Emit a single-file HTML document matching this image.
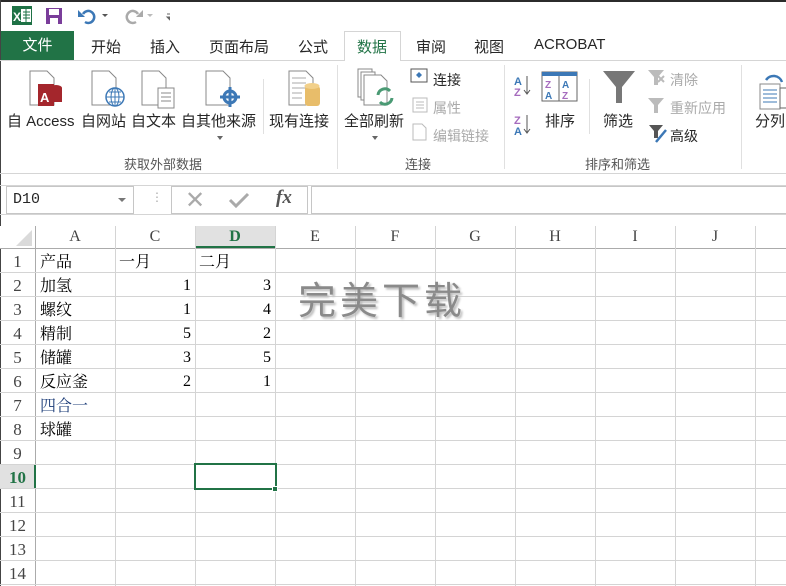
<!DOCTYPE html><html><head><meta charset="utf-8"><style>
*{margin:0;padding:0;box-sizing:border-box}
body{width:786px;height:586px;overflow:hidden;background:#fff;font-family:"Liberation Sans","Noto Sans CJK SC",sans-serif;position:relative;color:#262626}
.a{position:absolute}
.t{font-size:14px;white-space:nowrap}
.g{color:#aaa}
.lbl{font-size:13px;color:#555}
.cell{position:absolute;font-family:"Liberation Serif","Noto Serif CJK SC",serif;font-size:16px;color:#000;white-space:nowrap}
.cj{margin-top:-3px}
.vl{position:absolute;width:1px;background:#d4d4d4}
.hl{position:absolute;height:1px;background:#d4d4d4}
.rh{position:absolute;left:0;width:35px;text-align:center;font-family:"Liberation Serif",serif;font-size:17px;color:#444}
.ch{position:absolute;top:226px;height:22px;text-align:center;font-family:"Liberation Serif",serif;font-size:16px;color:#444;line-height:22px;width:80px}
</style></head><body>
<div class="a" style="left:0;top:0;width:786px;height:2px;background:#2b2b2b"></div>
<div class="a" style="left:0;top:0;width:1px;height:586px;background:#444"></div>
<svg class="a" style="left:10px;top:5px" width="160" height="22">
<rect x="2" y="1" width="20" height="19" fill="#1e7145"/><rect x="11" y="4" width="10" height="13" fill="#fff"/><path d="M13 7h7M13 10h7M13 13h7M16 4v13" stroke="#1e7145"/><text x="3" y="16" font-size="12" font-weight="bold" fill="#fff" font-family="Liberation Sans">X</text>
<rect x="36" y="3" width="16" height="16" fill="#7a3d9a"/><rect x="39" y="4" width="10" height="6" fill="#fff"/><rect x="40" y="13" width="8" height="6" fill="#fff"/>
<path d="M73 9a6 6 0 1 1 2 8" stroke="#3c78b6" stroke-width="2.5" fill="none"/><path d="M68 5v7h7z" fill="#3c78b6"/><path d="M92 9l3 3 3-3z" fill="#555"/>
<path d="M128 9a6 6 0 1 0-2 8" stroke="#aaa" stroke-width="2.5" fill="none"/><path d="M133 5v7h-7z" fill="#aaa"/><path d="M137 9l3 3 3-3z" fill="#bbb"/>
<path d="M157 9h6M157 12l3 3 3-3z" stroke="#666" fill="#666"/>
</svg>
<div class="a" style="left:1px;top:31px;width:73px;height:30px;background:#217346;color:#fff;font-size:15px;text-align:center;line-height:30px">文件</div>
<div class="a" style="left:0;top:60px;width:786px;height:1px;background:#d5d5d5"></div>
<div class="a" style="left:344px;top:31px;width:57px;height:30px;background:#fff;border:1px solid #d5d5d5;border-bottom:none"></div>
<div class="a t" style="left:91px;top:36px;font-size:15px">开始</div>
<div class="a t" style="left:150px;top:36px;font-size:15px">插入</div>
<div class="a t" style="left:209px;top:36px;font-size:15px">页面布局</div>
<div class="a t" style="left:298px;top:36px;font-size:15px">公式</div>
<div class="a t" style="left:357px;top:36px;font-size:15px;color:#217346">数据</div>
<div class="a t" style="left:416px;top:36px;font-size:15px">审阅</div>
<div class="a t" style="left:474px;top:36px;font-size:15px">视图</div>
<div class="a t" style="left:534px;top:36px;font-size:15px">ACROBAT</div>
<svg class="a" style="left:0;top:62px" width="786" height="80">
<g fill="#fff" stroke="#888"><path d="M30 9h17l7 7v27H30z"/><path d="M92 9h17l7 7v27H92z"/><path d="M142 9h17l7 7v27h-24z"/><path d="M206 9h17l7 7v27h-24z"/><path d="M289 9h17l7 7v27h-24z"/></g>
<rect x="38" y="22" width="16" height="22" fill="#a4262c"/><text x="40" y="40" fill="#fff" font-size="13" font-weight="bold" font-family="Liberation Sans">A</text>
<ellipse cx="56" cy="26" rx="6" ry="3" fill="#a4262c"/><rect x="50" y="26" width="12" height="14" fill="#a4262c"/>
<circle cx="115" cy="35" r="9" fill="#fff" stroke="#3c78b6" stroke-width="1.5"/><path d="M106 35h18M115 26v18M109 30h12M109 40h12" stroke="#3c78b6"/><ellipse cx="115" cy="35" rx="4" ry="9" fill="none" stroke="#3c78b6"/>
<rect x="158" y="26" width="16" height="20" fill="#fff" stroke="#888"/><path d="M161 31h10M161 35h10M161 39h10" stroke="#888"/>
<circle cx="230" cy="35" r="6" fill="none" stroke="#3c78b6" stroke-width="3"/><path d="M230 25v20M220 35h20" stroke="#3c78b6" stroke-width="3"/>
<path d="M292 16h14M292 21h14M292 26h14M292 31h10M292 36h10" stroke="#aaa"/><rect x="305" y="24" width="15" height="20" rx="3" fill="#e8bd6a"/><ellipse cx="312" cy="24" rx="7.5" ry="3" fill="#f2d08a"/>
<g fill="#fff" stroke="#888"><path d="M358 7h14v28h-14z"/><path d="M361 10h14v28h-14z"/><path d="M364 13h17l6 6v24h-23z"/></g>
<path d="M378 33a7 7 0 0 1 12-4M392 36a7 7 0 0 1-12 4" stroke="#4a9a74" stroke-width="3" fill="none"/>
<g font-size="11" font-family="Liberation Sans" font-weight="bold"><text x="514" y="23" fill="#3c78b6">A</text><text x="514" y="34" fill="#a56bbd">Z</text><text x="514" y="62" fill="#a56bbd">Z</text><text x="514" y="73" fill="#3c78b6">A</text></g>
<path d="M527 14v17M524 28l3 4 3-4M527 53v17M524 67l3 4 3-4" stroke="#555" fill="none"/>
<rect x="542" y="10" width="35" height="29" fill="#fff" stroke="#666"/><rect x="542" y="10" width="35" height="4" fill="#3c78b6"/><path d="M559 14v25" stroke="#666"/>
<g font-size="10" font-family="Liberation Sans" font-weight="bold"><text x="545" y="26" fill="#a56bbd">Z</text><text x="545" y="37" fill="#3c78b6">A</text><text x="562" y="26" fill="#3c78b6">A</text><text x="562" y="37" fill="#a56bbd">Z</text></g>
<path d="M603 9h32l-13 16v16h-6V25z" fill="#777"/>
<path d="M648 8h16l-6 7v8h-4v-8z" fill="#bbb"/><path d="M658 14l6 6M664 14l-6 6" stroke="#bbb" stroke-width="2"/>
<path d="M648 36h16l-6 7v8h-4v-8z" fill="#bbb"/>
<path d="M760 22h20v25h-20z" fill="#fff" stroke="#888"/><path d="M763 28h14M763 32h14M763 36h14M763 40h14" stroke="#3c78b6"/><path d="M766 18a9 9 0 0 1 16 2" stroke="#3c78b6" stroke-width="2.5" fill="none"/><rect x="780" y="26" width="8" height="20" fill="#fff" stroke="#666"/>
</svg>
<svg class="a" style="left:410px;top:68px" width="22" height="80"><rect x="1" y="1" width="16" height="13" fill="#fff" stroke="#555"/><path d="M9 4l3 3-3 3-3-3z" fill="#3c78b6"/><rect x="3" y="30" width="14" height="14" fill="#fff" stroke="#bbb"/><path d="M6 34h8M6 37h8M6 40h8" stroke="#bbb"/><path d="M3 56h9l4 4v12H3z" fill="#fff" stroke="#bbb"/></svg>
<svg class="a" style="left:648px;top:124px" width="22" height="22"><path d="M1 1h14l-5 6v7H6V7z" fill="#555"/><path d="M8 18l10-12" stroke="#3c78b6" stroke-width="2.5"/></svg>
<div class="a t" style="left:7px;top:110px;font-size:15px">自 Access</div>
<div class="a t" style="left:81px;top:110px;font-size:15px">自网站</div>
<div class="a t" style="left:131px;top:110px;font-size:15px">自文本</div>
<div class="a t" style="left:181px;top:110px;font-size:15px">自其他来源</div>
<div class="a t" style="left:269px;top:110px;font-size:15px">现有连接</div>
<div class="a t" style="left:344px;top:110px;font-size:15px">全部刷新</div>
<div class="a t" style="left:545px;top:110px;font-size:15px">排序</div>
<div class="a t" style="left:603px;top:110px;font-size:15px">筛选</div>
<div class="a t" style="left:755px;top:110px;font-size:15px">分列</div>
<div class="a t" style="left:433px;top:70px">连接</div>
<div class="a t g" style="left:433px;top:98px">属性</div>
<div class="a t g" style="left:433px;top:126px">编辑链接</div>
<div class="a t g" style="left:670px;top:70px">清除</div>
<div class="a t g" style="left:670px;top:98px">重新应用</div>
<div class="a t" style="left:670px;top:126px">高级</div>
<div class="a" style="left:217px;top:136px;border:3px solid transparent;border-top:4px solid #666"></div>
<div class="a" style="left:372px;top:136px;border:3px solid transparent;border-top:4px solid #666"></div>
<div class="a lbl" style="left:124px;top:154px">获取外部数据</div>
<div class="a lbl" style="left:405px;top:154px">连接</div>
<div class="a lbl" style="left:585px;top:154px">排序和筛选</div>
<div class="vl" style="left:263px;top:79px;height:55px;background:#e0e0e0"></div>
<div class="vl" style="left:337px;top:65px;height:104px;background:#e0e0e0"></div>
<div class="vl" style="left:504px;top:65px;height:104px;background:#e0e0e0"></div>
<div class="vl" style="left:589px;top:79px;height:55px;background:#e0e0e0"></div>
<div class="vl" style="left:741px;top:65px;height:104px;background:#e0e0e0"></div>
<div class="a" style="left:0;top:173px;width:786px;height:1px;background:#d5d5d5"></div>
<div class="a" style="left:0;top:185px;width:786px;height:1px;background:#d5d5d5"></div>
<div class="a" style="left:6px;top:186px;width:128px;height:28px;border:1px solid #c6c6c6;font-family:'Liberation Mono',monospace;font-size:15px;line-height:26px;padding-left:6px">D10</div>
<div class="a" style="left:118px;top:198px;border:4px solid transparent;border-top:4px solid #777"></div>
<div class="a" style="left:151px;top:190px;color:#aaa;font-size:12px">⋮</div>
<div class="a" style="left:171px;top:186px;width:137px;height:28px;border:1px solid #c6c6c6"></div>
<div class="a" style="left:185px;top:186px;color:#aaa;font-size:24px">✕</div>
<svg class="a" style="left:228px;top:192px" width="22" height="16"><path d="M2 8l6 6 12-12" stroke="#aaa" stroke-width="3" fill="none"/></svg>
<div class="a" style="left:276px;top:187px;font-family:'Liberation Serif',serif;font-style:italic;font-weight:bold;font-size:19px;color:#555">fx</div>
<div class="a" style="left:311px;top:186px;width:480px;height:28px;border:1px solid #c6c6c6"></div>
<div class="a" style="left:0;top:214px;width:786px;height:1px;background:#d5d5d5"></div>
<div class="a" style="left:0;top:226px;width:786px;height:23px;background:#fff"></div>
<div class="a" style="left:195px;top:226px;width:80px;height:22px;background:#e1e1e1"></div>
<div class="a" style="left:195px;top:246px;width:80px;height:2px;background:#217346"></div>
<svg class="a" style="left:14px;top:228px" width="20" height="20"><path d="M18 2v16H2z" fill="#dadada"/></svg>
<div class="a" style="left:0;top:248px;width:786px;height:1px;background:#ababab"></div>
<div class="a" style="left:35px;top:226px;width:1px;height:360px;background:#ababab"></div>
<div class="ch" style="left:35px">A</div><div class="ch" style="left:115px">C</div><div class="ch" style="left:195px;color:#217346;font-weight:bold">D</div><div class="ch" style="left:275px">E</div><div class="ch" style="left:355px">F</div><div class="ch" style="left:435px">G</div><div class="ch" style="left:515px">H</div><div class="ch" style="left:595px">I</div><div class="ch" style="left:675px">J</div>
<div class="vl" style="left:115px;top:226px;height:360px"></div><div class="vl" style="left:195px;top:226px;height:360px"></div><div class="vl" style="left:275px;top:226px;height:360px"></div><div class="vl" style="left:355px;top:226px;height:360px"></div><div class="vl" style="left:435px;top:226px;height:360px"></div><div class="vl" style="left:515px;top:226px;height:360px"></div><div class="vl" style="left:595px;top:226px;height:360px"></div><div class="vl" style="left:675px;top:226px;height:360px"></div><div class="vl" style="left:755px;top:226px;height:360px"></div>
<div class="hl" style="left:0;top:272px;width:786px"></div><div class="hl" style="left:0;top:296px;width:786px"></div><div class="hl" style="left:0;top:320px;width:786px"></div><div class="hl" style="left:0;top:344px;width:786px"></div><div class="hl" style="left:0;top:368px;width:786px"></div><div class="hl" style="left:0;top:392px;width:786px"></div><div class="hl" style="left:0;top:416px;width:786px"></div><div class="hl" style="left:0;top:440px;width:786px"></div><div class="hl" style="left:0;top:464px;width:786px"></div><div class="hl" style="left:0;top:488px;width:786px"></div><div class="hl" style="left:0;top:512px;width:786px"></div><div class="hl" style="left:0;top:536px;width:786px"></div><div class="hl" style="left:0;top:560px;width:786px"></div><div class="hl" style="left:0;top:584px;width:786px"></div>
<div class="a" style="left:0;top:465px;width:35px;height:23px;background:#e1e1e1"></div>
<div class="a" style="left:34px;top:465px;width:2px;height:23px;background:#217346"></div>
<div class="rh" style="top:252px">1</div><div class="rh" style="top:276px">2</div><div class="rh" style="top:300px">3</div><div class="rh" style="top:324px">4</div><div class="rh" style="top:348px">5</div><div class="rh" style="top:372px">6</div><div class="rh" style="top:396px">7</div><div class="rh" style="top:420px">8</div><div class="rh" style="top:444px">9</div><div class="rh" style="top:468px;color:#217346;font-weight:bold">10</div><div class="rh" style="top:492px">11</div><div class="rh" style="top:516px">12</div><div class="rh" style="top:540px">13</div><div class="rh" style="top:564px">14</div>
<div class="cell cj" style="left:40px;top:252px">产品</div><div class="cell cj" style="left:119px;top:252px">一月</div><div class="cell cj" style="left:199px;top:252px">二月</div>
<div class="cell cj" style="left:40px;top:276px">加氢</div><div class="cell cj" style="left:40px;top:300px">螺纹</div><div class="cell cj" style="left:40px;top:324px">精制</div><div class="cell cj" style="left:40px;top:348px">储罐</div><div class="cell cj" style="left:40px;top:372px">反应釜</div><div class="cell cj" style="left:40px;top:396px;color:#1f3f7a">四合一</div><div class="cell cj" style="left:40px;top:420px">球罐</div>
<div class="cell" style="left:183px;top:277px">1</div><div class="cell" style="left:183px;top:301px">1</div><div class="cell" style="left:183px;top:325px">5</div><div class="cell" style="left:183px;top:349px">3</div><div class="cell" style="left:183px;top:373px">2</div>
<div class="cell" style="left:263px;top:277px">3</div><div class="cell" style="left:263px;top:301px">4</div><div class="cell" style="left:263px;top:325px">2</div><div class="cell" style="left:263px;top:349px">5</div><div class="cell" style="left:263px;top:373px">1</div>
<div class="a" style="left:194px;top:463px;width:83px;height:27px;border:2px solid #217346"></div>
<div class="a" style="left:272px;top:486px;width:6px;height:6px;background:#217346;border:1px solid #fff"></div>
<div class="a" style="left:298px;top:270px;font-size:38px;color:#8a8a8a;letter-spacing:4px;text-shadow:2px 2px 2px #bbb;font-family:'Noto Sans CJK SC',sans-serif;font-weight:400">完美下载</div>
</body></html>
